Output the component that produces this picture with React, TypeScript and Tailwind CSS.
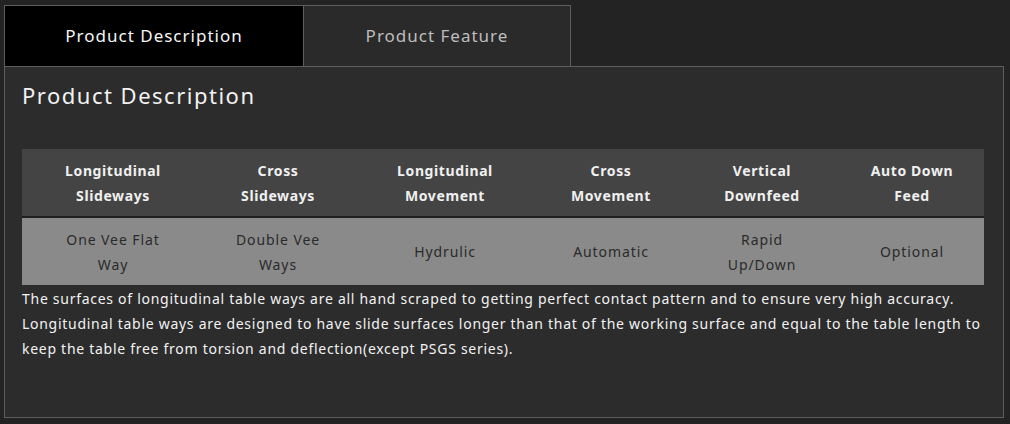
export default function App() {
  const cols = [
    { w: "w-[182px]", head: ["Longitudinal", "Slideways"], body: ["One Vee Flat", "Way"] },
    { w: "w-[148px]", head: ["Cross", "Slideways"], body: ["Double Vee", "Ways"] },
    { w: "w-[186px]", head: ["Longitudinal", "Movement"], body: ["Hydrulic"] },
    { w: "w-[146px]", head: ["Cross", "Movement"], body: ["Automatic"] },
    { w: "w-[156px]", head: ["Vertical", "Downfeed"], body: ["Rapid", "Up/Down"] },
    { w: "w-[144px]", head: ["Auto Down", "Feed"], body: ["Optional"] },
  ];

  return (
    <div className="h-[424px] w-[1010px] bg-[#232323] pt-[5px] pl-[4px] pr-[6px] font-['Noto_Sans',sans-serif]">
      <div className="flex h-[61px]">
        <div className="flex w-[300px] items-center justify-center border border-b-0 border-[#5e5e5e] bg-black pb-[1px] text-[17px] tracking-[1px] text-[#f5f5f5]">
          Product Description
        </div>
        <div className="flex w-[267px] items-center justify-center border border-b-0 border-l-0 border-[#5e5e5e] bg-[#2a2a2a] pb-[1px] text-[17px] tracking-[1px] text-[#bdbdbd]">
          Product Feature
        </div>
      </div>
      <div className="h-[352px] border border-[#5e5e5e] bg-[#2c2c2c] pl-[17px] pr-[18px] pt-[13px]">
        <h2 className="text-[22px] leading-[30px] tracking-[1.5px] text-[#f2f2f2]">Product Description</h2>
        <div className="mt-[39px] w-[962px]">
          <div className="flex border-b-2 border-[#1e1e1e] bg-[#444444]">
            {cols.map((c, i) => (
              <div key={i} className={`${c.w} flex h-[67px] flex-col items-center justify-center text-[14px] font-bold leading-[25px] tracking-[0.6px] text-[#f0f0f0]`}>
                {c.head.map((t) => (
                  <span key={t}>{t}</span>
                ))}
              </div>
            ))}
          </div>
          <div className="flex bg-[#8a8a8a]">
            {cols.map((c, i) => (
              <div key={i} className={`${c.w} flex h-[67px] flex-col items-center justify-center text-[14px] leading-[25px] tracking-[0.9px] text-[#2a2a2a]`}>
                {c.body.map((t) => (
                  <span key={t}>{t}</span>
                ))}
              </div>
            ))}
          </div>
        </div>
        <p className="mt-[1px] w-[966px] text-[14px] leading-[25px] tracking-[0.72px] text-[#f2f2f2]">
          The surfaces of longitudinal table ways are all hand scraped to getting perfect contact pattern and to ensure very high accuracy.
          <br />
          Longitudinal table ways are designed to have slide surfaces longer than that of the working surface and equal to the table length to keep the table free from torsion and deflection(except PSGS series).
        </p>
      </div>
    </div>
  );
}
